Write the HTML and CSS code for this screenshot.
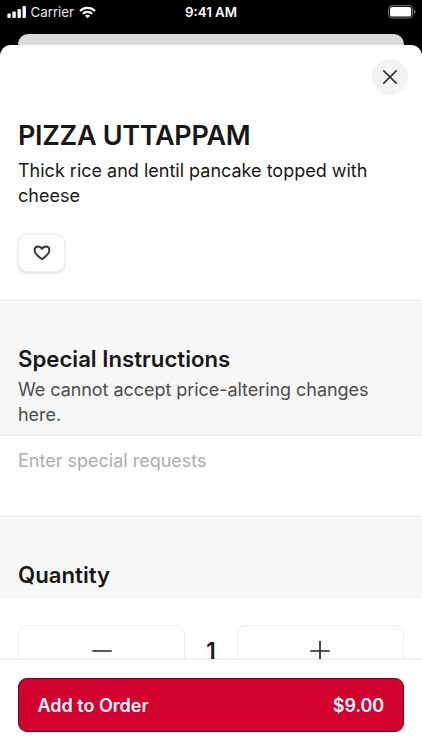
FILE: index.html
```html
<!DOCTYPE html>
<html lang="en">
<head>
<meta charset="utf-8">
<meta name="viewport" content="width=device-width, initial-scale=1">
<title>Pizza Uttappam</title>
<link rel="stylesheet" href="styles.css">
</head>
<body>
<div class="phone">
  <header class="status">
    <div class="status-left">
      <svg width="19" height="12" viewBox="0 0 19 12" fill="#fff"><rect x=".4" y="7.6" width="3.4" height="4.4" rx=".9"/><rect x="5.4" y="5.6" width="3.4" height="6.4" rx=".9"/><rect x="10.5" y="3" width="3.4" height="9" rx=".9"/><rect x="15.5" y="0" width="3.4" height="12" rx=".9"/></svg>
      <span class="carrier">Carrier</span>
      <svg class="wifi" width="17" height="13" viewBox="0 0 18 13" fill="none" stroke="#fff" stroke-width="2.2"><path d="M1.1 4.9Q4.4 1.6 9 1.6T16.9 4.9M4 7.8Q6 5.8 9 5.8T14 7.8"/><path d="M6.3 9.9Q9 7.9 11.7 9.9L9 12.6Z" fill="#fff" stroke="none"/></svg>
    </div>
    <span class="time">9:41 AM</span>
    <svg class="battery" width="28" height="14" viewBox="0 0 28 14"><rect x=".6" y=".6" width="24" height="12.4" rx="3.4" fill="none" stroke="#777" stroke-width="1"/><rect x="2" y="2" width="21.2" height="9.6" rx="2.2" fill="#fff"/><path d="M26 4.6Q27.6 5.2 27.6 6.8T26 9Z" fill="#777"/></svg>
  </header>
  <div class="back-card"></div>
  <main class="sheet">
    <div class="sheet-top">
      <button class="close" aria-label="Close"><svg width="16" height="16" viewBox="0 0 16 16" fill="none" stroke="#343434" stroke-width="1.7" stroke-linecap="round"><path d="M1.8 1.8 14.2 14.2M14.2 1.8 1.8 14.2"/></svg></button>
    </div>
    <section class="intro">
      <h1>PIZZA UTTAPPAM</h1>
      <p>Thick rice and lentil pancake topped with cheese</p>
      <button class="like" aria-label="Favorite"><svg width="18" height="16" viewBox="0 0 18 16" fill="none" stroke="#343434" stroke-width="2" stroke-linejoin="round"><path d="M9 14.2C6.2 12.2 1.6 8.8 1.6 5.2C1.6 3 3 1.4 5.1 1.4C6.8 1.4 8.2 2.2 9 3.8C9.8 2.2 11.2 1.4 12.9 1.4C15 1.4 16.4 3 16.4 5.2C16.4 8.8 11.8 12.2 9 14.2Z"/></svg></button>
    </section>
    <section class="band instructions">
      <h2>Special Instructions</h2>
      <p>We cannot accept price-altering changes here.</p>
    </section>
    <div class="requests">Enter special requests</div>
    <section class="band quantity"><h2>Quantity</h2></section>
    <div class="stepper">
      <button class="step" aria-label="Decrease"><svg width="20" height="20" viewBox="0 0 20 20" stroke="#222" stroke-width="1.7" stroke-linecap="round"><path d="M.8 10H19.2"/></svg></button>
      <span class="count">1</span>
      <button class="step plus" aria-label="Increase"><svg width="20" height="20" viewBox="0 0 20 20" stroke="#222" stroke-width="1.7" stroke-linecap="round"><path d="M.8 10H19.2M10 .8V19.2"/></svg></button>
    </div>
  </main>
  <footer class="bar">
    <button class="order"><span>Add to Order</span><span class="price">$9.00</span></button>
  </footer>
</div>
</body>
</html>
```
FILE: styles.css
```css
* { box-sizing: border-box; }
body { margin: 0; background: #000; font-family: Inter, "Liberation Sans", sans-serif; color: #171717; }
button { padding: 0; margin: 0; font: inherit; color: inherit; }
svg { display: block; flex: none; }
h1, h2, p { margin: 0; }
.phone { width: 422px; height: 750px; overflow: hidden; display: flex; flex-direction: column; }
.status { flex: none; height: 34px; padding: 0 6px 10px 7px; display: grid; grid-template-columns: 1fr auto 1fr; align-items: center; color: #fff; }
.status-left { display: flex; align-items: center; }
.carrier { margin-left: 4.5px; font-size: 13.3px; line-height: 16px; color: #e8e8e8; }
.wifi { margin-left: 5px; }
.time { margin-left: -1px; font-size: 13.3px; font-weight: 600; line-height: 16px; }
.battery { justify-self: end; margin-top: -1px; }
.back-card { flex: none; height: 11px; margin: 0 18px; background: #dadada; border-radius: 10px 10px 0 0; }
.sheet { flex: 1; min-height: 0; overflow: hidden; background: #fff; border-radius: 11px 11px 0 0; }
.sheet-top { height: 50px; padding: 13.5px 14px 0; display: flex; justify-content: flex-end; }
.close { width: 36px; height: 36px; border: 0; border-radius: 50%; background: #f3f3f3; display: grid; place-items: center; }
.intro { height: 204px; padding: 23px 18px 0; }
h1 { font-size: 27px; font-weight: 600; line-height: 36px; letter-spacing: -.3px; }
.intro p, .instructions p { font-size: 18px; line-height: 25px; }
.intro p { padding-top: 4px; }
.like { margin-top: 26px; width: 47px; height: 38px; border: 1px solid #eee; border-radius: 9px; background: #fff; box-shadow: 0 1px 3px rgba(0,0,0,.16); display: grid; place-items: center; }
.band { background: #f7f7f7; border-top: 1px solid #eee; border-bottom: 1px solid #eee; padding: 0 18px; }
h2 { font-size: 22.2px; font-weight: 600; line-height: 30px; }
.instructions { height: 137px; padding-top: 44px; }
.instructions p { padding-top: 3px; color: #4c4c4c; letter-spacing: -.05px; }
.requests { height: 79px; padding: 12px 18px; font-size: 18px; line-height: 25px; color: #adadad; }
.quantity { height: 83px; padding-top: 44px; }
.stepper { padding: 27px 18px 0; display: grid; grid-template-columns: 167px 1fr 167px; }
.step { height: 52px; border: 1px solid #eee; border-radius: 9px; background: #fff; display: grid; place-items: center; }
.plus svg { margin-left: -1px; }
.count { text-align: center; font-size: 22.5px; font-weight: 600; line-height: 52px; }
.bar { flex: none; height: 91px; padding: 18px 18px; background: #fff; border-top: 1px solid #eee; box-shadow: 0 -1px 1px rgba(0,0,0,.04); z-index: 1; }
.order { width: 100%; height: 54px; padding: 0 19px 0 18.5px; background: #d1002f; border: 1px solid #75001a; border-radius: 9px; color: #fff; display: flex; align-items: center; justify-content: space-between; font-size: 18px; font-weight: 600; }
.price { letter-spacing: -.1px; }
```
